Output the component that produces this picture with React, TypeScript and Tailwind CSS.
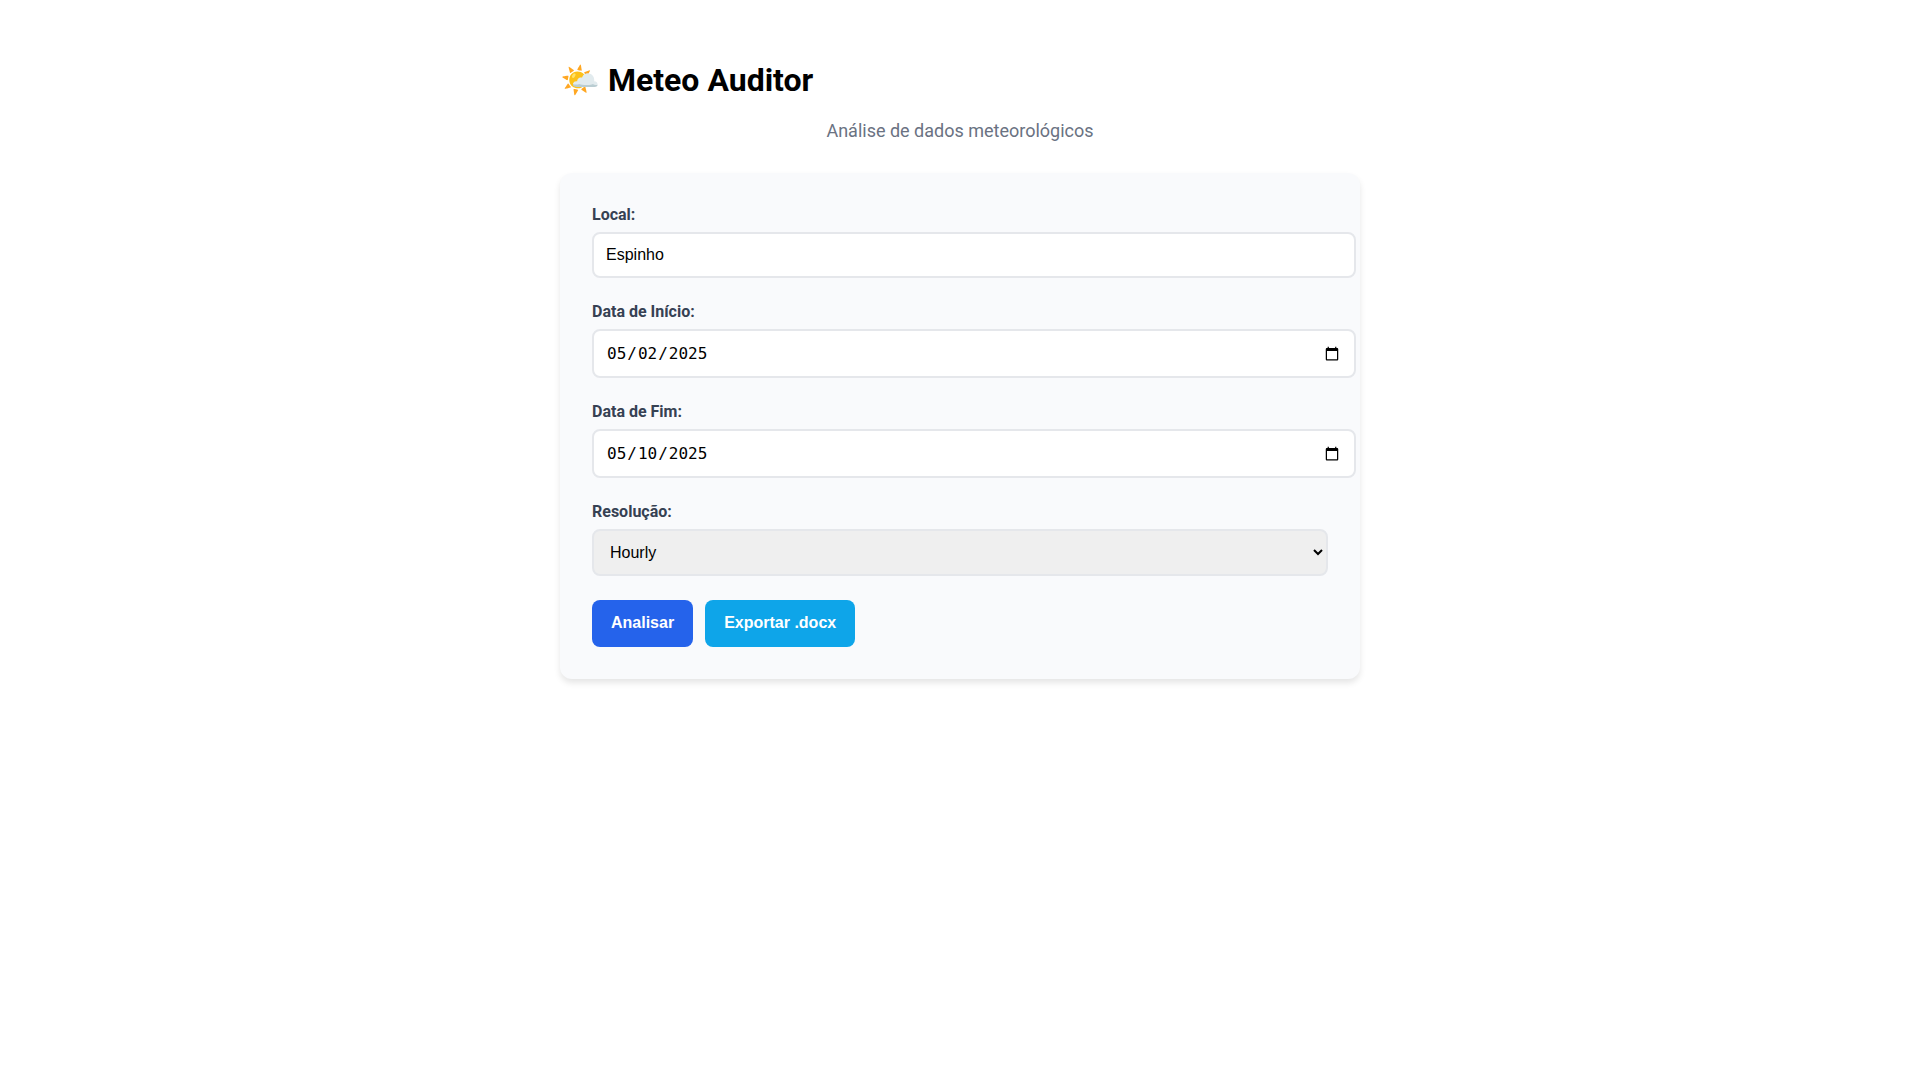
import React from "react";

const label = "mb-2 block leading-[19px] font-bold text-gray-700";
const field =
  "box-content block w-full rounded-lg border-2 border-gray-200 bg-white p-3 text-base text-black";
const dateField = "h-[21px] font-['DejaVu_Sans_Mono',monospace] leading-[normal]";
const button =
  "h-[47px] rounded-lg px-[19px] pb-px font-['Liberation_Sans',sans-serif] text-base leading-[18px] font-semibold text-white";

export default function App() {
  return (
    <main className="mx-auto max-w-[800px] py-14 font-['Roboto',sans-serif] text-base text-black">
      <h1 className="text-[32px] leading-[48px] font-bold">🌤️ Meteo Auditor</h1>
      <p className="mt-4 mb-8 text-center text-[18px] leading-[21px] text-gray-500">
        Análise de dados meteorológicos
      </p>
      <form
        className="flex flex-col gap-6 rounded-xl bg-[#f9fafc] p-8 shadow-[0_4px_6px_rgba(0,0,0,0.1)]"
        onSubmit={(e) => e.preventDefault()}
      >
        <div>
          <label htmlFor="local" className={label}>Local:</label>
          <input
            id="local"
            type="text"
            defaultValue="Espinho"
            className={`${field} font-['Liberation_Sans',sans-serif] leading-[18px]`}
          />
        </div>
        <div>
          <label htmlFor="inicio" className={label}>Data de Início:</label>
          <input
            id="inicio"
            type="date"
            defaultValue="2025-05-02"
            className={`${field} ${dateField}`}
          />
        </div>
        <div>
          <label htmlFor="fim" className={label}>Data de Fim:</label>
          <input
            id="fim"
            type="date"
            defaultValue="2025-05-10"
            className={`${field} ${dateField}`}
          />
        </div>
        <div>
          <label htmlFor="resolucao" className={label}>Resolução:</label>
          <select
            id="resolucao"
            defaultValue="hourly"
            className="block w-full rounded-lg border-2 border-gray-200 bg-[#efefef] p-3 font-['Liberation_Sans',sans-serif] text-base leading-[19px] text-black"
          >
            <option value="hourly">Hourly</option>
            <option value="daily">Daily</option>
          </select>
        </div>
        <div className="flex gap-3">
          <button type="submit" className={`${button} bg-[#2563eb]`}>Analisar</button>
          <button type="button" className={`${button} bg-[#0ea5e9]`}>Exportar .docx</button>
        </div>
      </form>
    </main>
  );
}
